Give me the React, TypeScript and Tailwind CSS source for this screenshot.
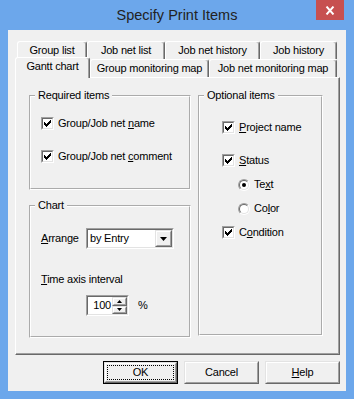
import React from 'react';
import clsx from 'clsx';

const sunkenOuter =
  'border border-t-[#a0a0a0] border-l-[#a0a0a0] border-r-white border-b-white';
const sunkenInner =
  'border border-t-[#696969] border-l-[#696969] border-r-[#e3e3e3] border-b-[#e3e3e3] bg-white';
const raisedOuter =
  'border border-t-[#e3e3e3] border-l-[#e3e3e3] border-r-[#696969] border-b-[#696969]';
const raisedInner =
  'border border-t-white border-l-white border-r-[#a0a0a0] border-b-[#a0a0a0] bg-[#f0f0f0]';

// classic 7x7 pixel check mark
const checkCols = [
  [0, 2],
  [1, 3],
  [2, 4],
  [3, 3],
  [4, 2],
  [5, 1],
  [6, 0],
];

const CheckBox = () => (
  <span className={clsx('flex h-[13px] w-[13px] shrink-0', sunkenOuter)}>
    <span className={clsx('flex h-full w-full', sunkenInner)}>
      <svg width="9" height="9" viewBox="0 0 9 9" className="block">
        {checkCols.map(([x, y]) => (
          <rect key={x} x={x + 1} y={y + 1} width="1" height="3" fill="#000" />
        ))}
      </svg>
    </span>
  </span>
);

const Radio = ({ checked }: { checked?: boolean }) => (
  <span className="flex h-[12px] w-[12px] shrink-0 rounded-full border border-t-[#a0a0a0] border-l-[#a0a0a0] border-r-white border-b-white">
    <span className="flex h-full w-full items-center justify-center rounded-full border border-t-[#696969] border-l-[#696969] border-r-[#e3e3e3] border-b-[#e3e3e3] bg-white">
      {checked && <span className="h-[4px] w-[4px] rounded-full bg-black" />}
    </span>
  </span>
);

const Raised = ({
  className,
  innerClassName,
  children,
}: {
  className?: string;
  innerClassName?: string;
  children?: React.ReactNode;
}) => (
  <div className={clsx('flex', raisedOuter, className)}>
    <div
      className={clsx(
        'flex flex-1 items-center justify-center',
        raisedInner,
        innerClassName
      )}
    >
      {children}
    </div>
  </div>
);

const Tab = ({
  className,
  children,
}: {
  className?: string;
  children: React.ReactNode;
}) => (
  <div
    className={clsx(
      'flex h-[18px] items-center justify-center rounded-t-[3px] border-l border-t border-r border-l-white border-t-white border-r-[#696969] shadow-[inset_-1px_0_0_#a0a0a0]',
      className
    )}
  >
    {children}
  </div>
);

// etched group box: groove on white gives the grey + white line pair
const Group = ({
  title,
  className,
  children,
}: {
  title: string;
  className?: string;
  children: React.ReactNode;
}) => (
  <fieldset className={clsx('border-2 border-white [border-style:groove]', className)}>
    <legend className="ml-[4px] px-[3px]">{title}</legend>
    {children}
  </fieldset>
);

export default function App() {
  return (
    <div className="flex h-[399px] w-[354px] flex-col bg-[#6ca7eb] font-['Liberation_Sans',Arial,sans-serif] text-[11px] leading-[13px] tracking-[-0.2px] text-black">
      {/* title bar */}
      <div className="relative flex h-[30px] items-center justify-center">
        <span className="text-[14.5px] leading-none tracking-normal text-[#222]">
          Specify Print Items
        </span>
        <div className="absolute right-[10px] top-0 flex h-[20px] w-[28px] items-center justify-center bg-[#c75050]">
          <svg width="10" height="9" viewBox="0 0 10 9">
            <path d="M1.5 0.5L8.5 8.5M8.5 0.5L1.5 8.5" stroke="#fff" strokeWidth="1.9" />
          </svg>
        </div>
      </div>

      {/* client area */}
      <div className="mx-[8px] mb-[8px] flex flex-1 flex-col bg-[#f0f0f0] pl-[7px] pt-[11px]">
        <div className="ml-[2px] flex">
          <Tab className="w-[70px]">Group list</Tab>
          <Tab className="w-[78px]">Job net list</Tab>
          <Tab className="w-[95px]">Job net history</Tab>
          <Tab className="w-[77px]">Job history</Tab>
        </div>
        <div className="flex h-[18px] items-start">
          <Tab className="relative z-10 -mt-[2px] h-[21px] w-[75px] bg-[#f0f0f0] pb-[3px]">
            Gantt chart
          </Tab>
          <Tab className="w-[119px]">Group monitoring map</Tab>
          <Tab className="w-[128px]">Job net monitoring map</Tab>
        </div>

        {/* tab panel */}
        <div className="flex h-[278px] w-[325px] gap-[7px] border border-l-white border-t-white border-r-[#696969] border-b-[#696969] pl-[13px] pt-[11px] shadow-[inset_-1px_-1px_0_#a0a0a0]">
          <div className="flex w-[162px] flex-col gap-[9px]">
            <Group title="Required items" className="h-[101px]">
              <div className="flex flex-col gap-[20px] pl-[10px] pt-[15px]">
                <label className="flex items-center gap-[4px]">
                  <CheckBox />
                  <span>
                    Group/Job net <u>n</u>ame
                  </span>
                </label>
                <label className="flex items-center gap-[4px]">
                  <CheckBox />
                  <span>
                    Group/Job net <u>c</u>omment
                  </span>
                </label>
              </div>
            </Group>

            <Group title="Chart" className="h-[139px]">
              <div className="flex flex-col pl-[10px] pt-[16px]">
                <div className="flex h-[21px] items-center">
                  <span className="w-[45px]">
                    <u>A</u>rrange
                  </span>
                  <div className={clsx('flex h-[21px] w-[88px]', sunkenOuter)}>
                    <div className={clsx('flex flex-1 items-stretch', sunkenInner)}>
                      <span className="flex flex-1 items-center pl-[2px]">by Entry</span>
                      <Raised className="w-[17px]">
                        <svg width="7" height="4" viewBox="0 0 7 4">
                          <polygon points="0,0 7,0 3.5,4" fill="#000" />
                        </svg>
                      </Raised>
                    </div>
                  </div>
                </div>
                <span className="mt-[24px]">
                  <u>T</u>ime axis interval
                </span>
                <div className="ml-[45px] mt-[9px] flex items-center">
                  <div className={clsx('flex h-[21px] w-[43px]', sunkenOuter)}>
                    <div className={clsx('flex flex-1 items-stretch', sunkenInner)}>
                      <span className="flex flex-1 items-center justify-end pr-[1px]">
                        100
                      </span>
                      <div className="flex w-[15px] flex-col">
                        <Raised className="flex-1">
                          <svg width="5" height="3" viewBox="0 0 5 3">
                            <polygon points="2.5,0 5,3 0,3" fill="#000" />
                          </svg>
                        </Raised>
                        <Raised className="flex-1">
                          <svg width="5" height="3" viewBox="0 0 5 3">
                            <polygon points="0,0 5,0 2.5,3" fill="#000" />
                          </svg>
                        </Raised>
                      </div>
                    </div>
                  </div>
                  <span className="ml-[9px]">%</span>
                </div>
              </div>
            </Group>
          </div>

          <Group title="Optional items" className="h-[247px] w-[125px]">
            <div className="flex flex-col pl-[22px] pt-[19px]">
              <label className="flex h-[13px] items-center gap-[4px]">
                <CheckBox />
                <span>
                  <u>P</u>roject name
                </span>
              </label>
              <label className="mt-[20px] flex h-[13px] items-center gap-[4px]">
                <CheckBox />
                <span>
                  <u>S</u>tatus
                </span>
              </label>
              <label className="ml-[16px] mt-[11px] flex h-[13px] items-center gap-[4px]">
                <Radio checked />
                <span>
                  Te<u>x</u>t
                </span>
              </label>
              <label className="ml-[16px] mt-[11px] flex h-[13px] items-center gap-[4px]">
                <Radio />
                <span>
                  Co<u>l</u>or
                </span>
              </label>
              <label className="mt-[11px] flex h-[13px] items-center gap-[4px]">
                <CheckBox />
                <span>
                  C<u>o</u>ndition
                </span>
              </label>
            </div>
          </Group>
        </div>

        {/* dialog buttons */}
        <div className="mt-[6px] flex w-[325px] justify-end gap-[6px]">
          <div className="flex h-[23px] w-[75px] border border-black">
            <Raised className="flex-1" innerClassName="p-0">
              <div className="m-[1px] flex h-[calc(100%-2px)] flex-1 items-center justify-center border border-dotted border-black">
                OK
              </div>
            </Raised>
          </div>
          <Raised className="h-[23px] w-[75px]">Cancel</Raised>
          <Raised className="h-[23px] w-[75px]">
            <span>
              <u>H</u>elp
            </span>
          </Raised>
        </div>
      </div>
    </div>
  );
}
